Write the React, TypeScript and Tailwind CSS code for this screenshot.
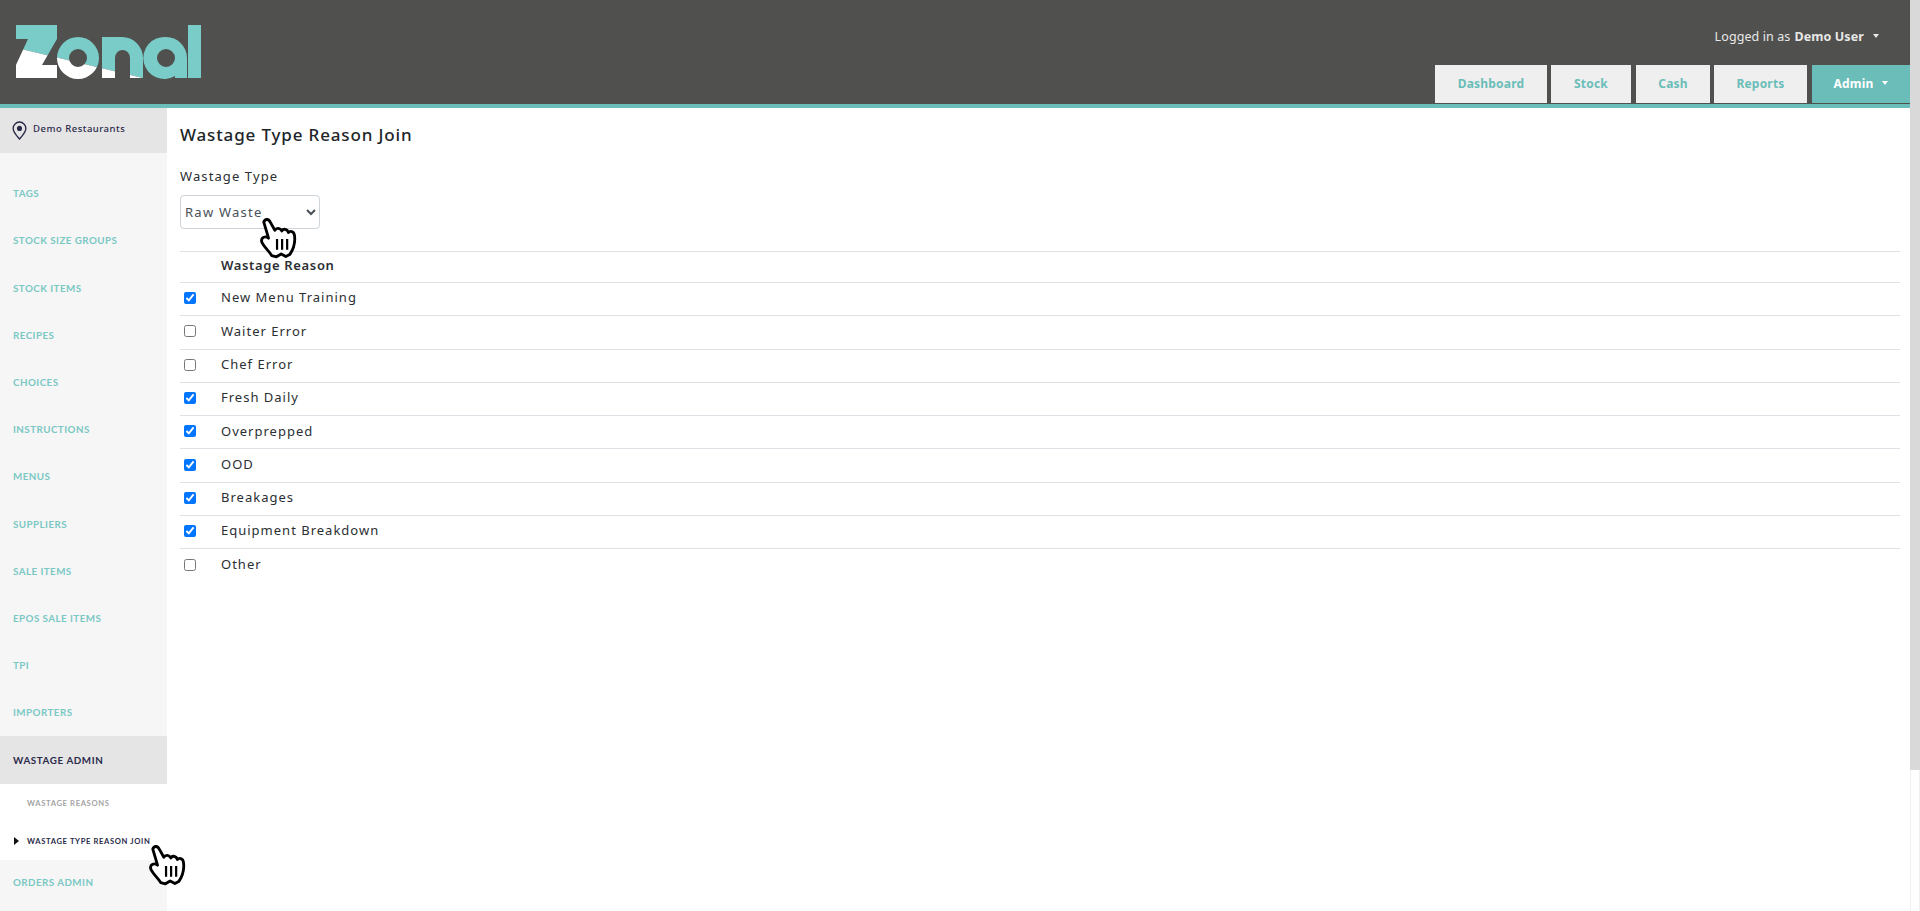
import React from 'react'

const menuItems = [
  'Tags',
  'Stock Size Groups',
  'Stock Items',
  'Recipes',
  'Choices',
  'Instructions',
  'Menus',
  'Suppliers',
  'Sale Items',
  'EPOS Sale Items',
  'TPI',
  'Importers',
]

const reasons = [
  { name: 'New Menu Training', checked: true },
  { name: 'Waiter Error', checked: false },
  { name: 'Chef Error', checked: false },
  { name: 'Fresh Daily', checked: true },
  { name: 'Overprepped', checked: true },
  { name: 'OOD', checked: true },
  { name: 'Breakages', checked: true },
  { name: 'Equipment Breakdown', checked: true },
  { name: 'Other', checked: false },
]

const tabs = [
  { label: 'Dashboard', width: 'w-[112px]' },
  { label: 'Stock', width: 'w-[80px]' },
  { label: 'Cash', width: 'ml-[1px] w-[74px]' },
  { label: 'Reports', width: 'w-[93px]' },
]

function Logo() {
  const shapes = (
    <>
      <path d="M16 25H57V39L42 65H57V78H16V65L28 39H16Z" />
      <path fillRule="evenodd" d="M78 37a21 21 0 1 0 0 42a21 21 0 1 0 0-42ZM78 49a9 9 0 1 1 0 18a9 9 0 1 1 0-18Z" />
      <path d="M102 78V37H122a21 21 0 0 1 21 21V78H130V58a7.500 8 0 0 0-15 0V78Z" />
      <path fillRule="evenodd" d="M166 37a21 21 0 0 1 21 21V78H175V76a21 21 0 1 1-9-39ZM166 49a9 9 0 1 0 0 18a9 9 0 1 0 0-18Z" />
      <path d="M188 25H201V78H188Z" />
    </>
  )
  return (
    <svg width="210" height="104" viewBox="0 0 210 104" className="shrink-0">
      <defs>
        <clipPath id="logo-top">
          <polygon points="0,0 210,0 210,94 0,44" />
        </clipPath>
        <clipPath id="logo-bottom">
          <polygon points="0,44 210,94 210,104 0,104" />
        </clipPath>
      </defs>
      <g fill="#7accc9" clipPath="url(#logo-top)">{shapes}</g>
      <g fill="#ffffff" clipPath="url(#logo-bottom)">{shapes}</g>
    </svg>
  )
}

function HandCursor({ className }: { className: string }) {
  return (
    <svg viewBox="-4 -4 118 133" className={className}>
      <path
        d="M10 12C14 0 26 2 31 13L45 38C50 29 62 30 67 40C72 32 84 33 88 45C93 39 105 41 107 53C110 72 105 96 92 115L80 121L65 113L50 122L35 118C22 98 6 87 3 73C2 60 15 55 25 63Z"
        fill="#ffffff"
        stroke="#000000"
        strokeWidth="9"
        strokeLinejoin="round"
      />
      <path d="M52 66V100M68 66V100M84 66V100" stroke="#000000" strokeWidth="7" fill="none" />
    </svg>
  )
}

export default function App() {
  return (
    <div className="relative flex h-[911px] w-full overflow-hidden bg-white font-['Noto_Sans','Open_Sans',sans-serif] text-[#2b2f33]">
      <div className="flex min-w-0 flex-1 flex-col">
        <header className="flex h-[108px] shrink-0 justify-between border-b-4 border-[#6abdb8] bg-[#50504e]">
          <Logo />
          <div className="flex flex-col items-end">
            <div className="mt-[28px] mr-[31px] flex h-[18px] items-center text-[12.500px] tracking-[0.1px] text-[#e8e8e8]">
              <span>Logged in as</span>
              <span className="ml-[4px] font-bold">Demo User</span>
              <span className="ml-[9px] mb-[3px] h-0 w-0 border-x-[3.500px] border-t-[4px] border-x-transparent border-t-[#e8e8e8]" />
            </div>
            <nav className="mt-[19px] flex h-[38px] gap-[4px] text-[12px] font-bold tracking-[0.2px]">
              {tabs.map(tab => (
                <a key={tab.label} className={`flex items-center justify-center bg-[#efefef] text-[#6abdb8] ${tab.width}`}>
                  {tab.label}
                </a>
              ))}
              <a className="ml-[1px] flex w-[98px] items-center justify-center bg-[#6abdb8] text-white">
                Admin
                <span className="ml-[9px] mb-[3px] h-0 w-0 border-x-[3.500px] border-t-[4px] border-x-transparent border-t-white" />
              </a>
            </nav>
          </div>
        </header>

        <div className="flex min-h-0 flex-1">
          <aside className="flex w-[167px] shrink-0 flex-col bg-[#f6f6f6]">
            <div className="flex h-[45px] shrink-0 items-center gap-[6px] bg-[#e5e5e5] pb-[2px] pl-[12px] text-[9.500px] font-medium tracking-[0.5px] text-[#2a2a4a]">
              <svg width="15" height="19" viewBox="0 0 14 18" fill="none" className="mt-[1px]">
                <path d="M7 17C4 13.500 1 10.500 1 7a6 6 0 0 1 12 0c0 3.500-3 6.500-6 10Z" stroke="#2a2a4a" strokeWidth="1.300" />
                <circle cx="7" cy="7" r="2.400" fill="#2a2a4a" />
              </svg>
              Demo Restaurants
            </div>
            <ul className="mt-[17px] flex flex-col font-['Lato','Noto_Sans',sans-serif] text-[9.800px] font-bold uppercase tracking-[0.45px] text-[#7ac8c4]">
              {menuItems.map(item => (
                <li key={item} className="flex h-[47.200px] items-center pl-[13px]">
                  {item}
                </li>
              ))}
              <li className="flex h-[48px] items-center bg-[#e5e5e5] pl-[13px] tracking-[0.6px] text-[#2a2a4a]">Wastage Admin</li>
              <li className="flex h-[38px] items-center bg-white pl-[27px] text-[7.600px] tracking-[0.65px] text-[#a3a3a3]">Wastage Reasons</li>
              <li className="relative flex h-[38px] items-center bg-white pl-[27px] text-[7.600px] tracking-[0.65px] text-[#2a2a4a]">
                <span className="absolute left-[14px] h-0 w-0 border-y-[4px] border-l-[5px] border-y-transparent border-l-[#111111]" />
                Wastage Type Reason Join
              </li>
              <li className="flex h-[43px] items-center pt-[1px] pl-[13px]">Orders Admin</li>
            </ul>
          </aside>

          <main className="min-w-0 flex-1 pt-[14px] pr-[10px] pl-[13px]">
            <h1 className="text-[17px] leading-[26px] font-medium tracking-[0.85px] text-[#212529]">Wastage Type Reason Join</h1>
            <label className="mt-[18px] block text-[13px] leading-[20px] tracking-[1.100px]">Wastage Type</label>
            <select className="mt-[9px] block h-[34px] w-[140px] rounded-[4px] border border-[#ced4da] bg-white text-[13px] tracking-[1.250px] text-[#495057]">
              <option>Raw Waste</option>
            </select>
            <table className="mt-[22px] w-full border-collapse text-[13px] tracking-[1px]">
              <thead>
                <tr className="h-[31px] border-y border-[#dee2e6]">
                  <th className="w-[41px]" />
                  <th className="pb-[3px] text-left font-semibold tracking-[0.65px]">Wastage Reason</th>
                </tr>
              </thead>
              <tbody>
                {reasons.map(reason => (
                  <tr key={reason.name} className="h-[33.300px] border-b border-[#dee2e6] last:border-b-0">
                    <td className="pb-[2px] pl-[4px]">
                      <input type="checkbox" defaultChecked={reason.checked} className="block h-[12px] w-[12px]" />
                    </td>
                    <td className="pb-[2px]">{reason.name}</td>
                  </tr>
                ))}
              </tbody>
            </table>
          </main>
        </div>
      </div>

      <div className="flex w-[10px] shrink-0 flex-col border-x border-[#f0f0f0] bg-white">
        <div className="-mx-px h-[770px] bg-[#d9d9d9]" />
      </div>

      <HandCursor className="absolute top-[217px] left-[259px] h-[42px] w-[38px]" />
      <HandCursor className="absolute top-[844px] left-[148px] h-[42px] w-[38px]" />
    </div>
  )
}
